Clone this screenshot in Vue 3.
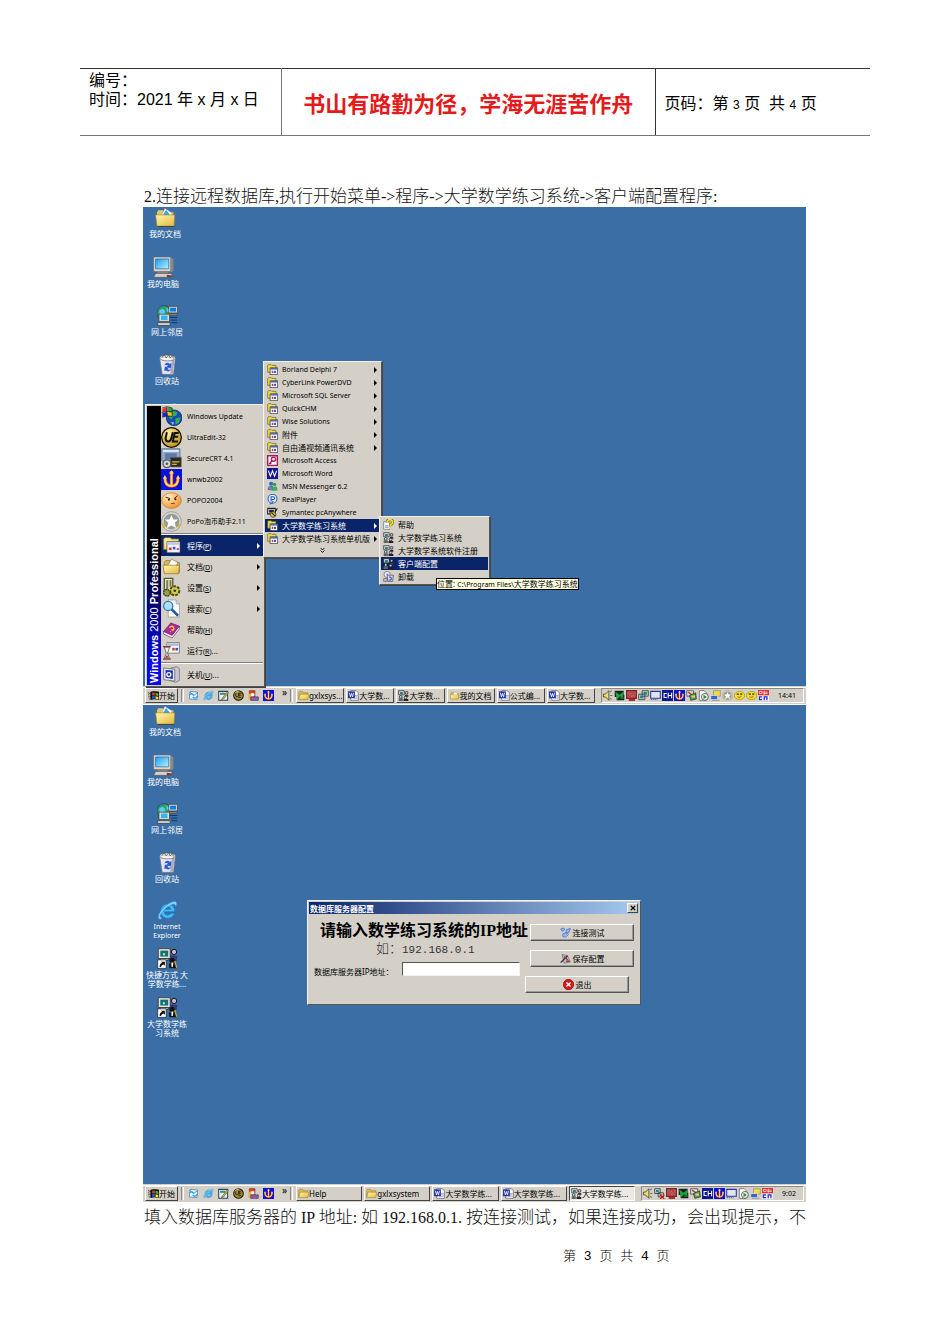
<script setup>
const desktopBase = [
  { icon: 'mydocs', lines: ['我的文档'], left: -2, top: 0 },
  { icon: 'computer', lines: ['我的电脑'], left: -4, top: 50 },
  { icon: 'network', lines: ['网上邻居'], left: 0, top: 98 },
  { icon: 'recycle', lines: ['回收站'], left: 0, top: 147 },
  { icon: 'ie', lines: ['Internet', 'Explorer'], left: 0, top: 195, latin: true },
]

const desktopMore = [
  { icon: 'shortcut', lines: ['快捷方式 大', '学数学练...'], left: 0, top: 243 },
  { icon: 'shortcut', lines: ['大学数学练', '习系统'], left: 0, top: 292 },
]

const startGroups = [
  [
    { icon: 'update', text: 'Windows Update' },
    { icon: 'ue', text: 'UltraEdit-32' },
    { icon: 'crt', text: 'SecureCRT 4.1' },
    { icon: 'anchor', text: 'wnwb2002' },
    { icon: 'popo', text: 'POPO2004' },
    { icon: 'star', text: 'PoPo泡币助手2.11' },
  ],
  [
    { icon: 'programs', text: '程序', key: 'P', arrow: true, active: true },
    { icon: 'docs', text: '文档', key: 'D', arrow: true },
    { icon: 'settings', text: '设置', key: 'S', arrow: true },
    { icon: 'search', text: '搜索', key: 'C', arrow: true },
    { icon: 'book', text: '帮助', key: 'H' },
    { icon: 'run', text: '运行', key: 'R', more: true },
  ],
  [{ icon: 'shutdown', text: '关机', key: 'U', more: true }],
]

const programs = [
  { icon: 'group', text: 'Borland Delphi 7', arrow: true, latin: true },
  { icon: 'group', text: 'CyberLink PowerDVD', arrow: true, latin: true },
  { icon: 'group', text: 'Microsoft SQL Server', arrow: true, latin: true },
  { icon: 'group', text: 'QuickCHM', arrow: true, latin: true },
  { icon: 'group', text: 'Wise Solutions', arrow: true, latin: true },
  { icon: 'group', text: '附件', arrow: true },
  { icon: 'group', text: '自由通视频通讯系统', arrow: true },
  { icon: 'access', text: 'Microsoft Access', latin: true },
  { icon: 'word', text: 'Microsoft Word', latin: true },
  { icon: 'msn', text: 'MSN Messenger 6.2', latin: true },
  { icon: 'real', text: 'RealPlayer', latin: true },
  { icon: 'pca', text: 'Symantec pcAnywhere', latin: true },
  { icon: 'group', text: '大学数学练习系统', arrow: true, active: true },
  { icon: 'group', text: '大学数学练习系统单机版', arrow: true },
]

const system = [
  { icon: 'help', text: '帮助' },
  { icon: 'people', text: '大学数学练习系统' },
  { icon: 'people', text: '大学数学系统软件注册' },
  { icon: 'people', text: '客户端配置', active: true },
  { icon: 'uninstall', text: '卸载' },
]

const quick = ['outlook', 'ie', 'desk', 'ueround', 'player', 'anchor']

const screens = [
  {
    id: 'menu',
    icons: desktopBase,
    tasks: [
      { icon: 'folder', text: 'gxlxsys...' },
      { icon: 'worddoc', text: '大学数...' },
      { icon: 'people', text: '大学数...' },
      { icon: 'docs', text: '我的文档' },
      { icon: 'worddoc', text: '公式编...' },
      { icon: 'worddoc', text: '大学数...' },
    ],
    tray: ['sound', 'green', 'blocked', 'monitors', 'frame', 'ch', 'anchor', 'colors', 'page', 'yellowpc', 'star', 'smile', 'smile', 'cn'],
    time: '14:41',
  },
  {
    id: 'dialog',
    icons: [...desktopBase, ...desktopMore],
    tasks: [
      { icon: 'folder', text: 'Help' },
      { icon: 'folder', text: 'gxlxsystem' },
      { icon: 'worddoc', text: '大学数学练...' },
      { icon: 'worddoc', text: '大学数学练...' },
      { icon: 'people', text: '大学数学练...', active: true },
    ],
    tray: ['sound', 'netoff', 'blocked', 'green', 'colors', 'ch', 'anchor', 'frame', 'page', 'yellowpc', 'cn'],
    time: '9:02',
  },
]
</script>

<template>
  <svg class="defs" aria-hidden="true">
    <defs>
      <linearGradient id="gFolder" x1="0" y1="0" x2="1" y2="1">
        <stop offset="0" stop-color="#fff6b0" /><stop offset="1" stop-color="#e3b93c" />
      </linearGradient>
      <linearGradient id="gScreen" x1="0" y1="0" x2="1" y2="1">
        <stop offset="0" stop-color="#1d9bf0" /><stop offset="1" stop-color="#b6f4ff" />
      </linearGradient>
      <radialGradient id="gGold" cx=".35" cy=".3" r=".8">
        <stop offset="0" stop-color="#fff2a0" /><stop offset="1" stop-color="#b8890c" />
      </radialGradient>
      <radialGradient id="gFace" cx=".35" cy=".3" r=".8">
        <stop offset="0" stop-color="#fff0c0" /><stop offset="1" stop-color="#f08a24" />
      </radialGradient>
    </defs>
    <symbol id="mydocs" viewBox="0 0 32 32">
      <path d="M3 8l2-3h7l2 3h14v16H3z" fill="#e8c860" />
      <path d="M9 14l6-12 11 7-3 10z" fill="#fff" stroke="#86a" stroke-width=".6" />
      <path d="M12 12l5-8 6 8z" fill="#38a8e0" />
      <path d="M1 12h29l-1 17H3z" fill="url(#gFolder)" stroke="#a98a2c" />
      <path d="M4 29h26v1H4z" fill="#333" />
    </symbol>
    <symbol id="computer" viewBox="0 0 32 32">
      <path d="M3 1h24l4 2v18l-3 2H3z" fill="#8f8c88" />
      <path d="M1 0h26v22H1z" fill="#ded9d2" stroke="#6b6762" />
      <path d="M4 3h20v15H4z" fill="url(#gScreen)" stroke="#155aa5" />
      <path d="M8 22h14l3 4H6z" fill="#8a847c" />
      <path d="M4 25h24l3 6H1z" fill="#d8d2ca" stroke="#5c5650" />
      <path d="M21 27l9 1v3h-9z" fill="#6d3f4f" />
    </symbol>
    <symbol id="network" viewBox="0 0 32 32">
      <circle cx="11" cy="12" r="11" fill="#2da06a" stroke="#116" stroke-width=".7" />
      <path d="M4 8q6-4 8 1t-5 8q-5-3-3-9zM14 4q6 2 6 8l-5-2z" fill="#5cc8f4" />
      <path d="M18 2h13v10H18zM19 14h12v2H19z" fill="#e4e0d8" stroke="#333" />
      <path d="M20 4h9v6h-9z" fill="#0f7ede" />
      <path d="M3 14h16v11H3zM1 27h19v4H1z" fill="#e4e0d8" stroke="#333" />
      <path d="M6 16h10v7H6z" fill="#36b3f2" />
      <path d="M20 19h11M21 23h10M22 27h9" stroke="#063a75" stroke-width="1.500" />
    </symbol>
    <symbol id="recycle" viewBox="0 0 32 32">
      <path d="M4 6h24l-3 25H8z" fill="#e6e6ee" stroke="#77798c" />
      <path d="M23 8h4l-3 22h-4z" fill="#a9aabd" />
      <ellipse cx="16" cy="6" rx="12" ry="4.500" fill="#f5f5f5" stroke="#555" />
      <path d="M7 6l4-5 3 5 4-5 2 5 4-4 1 5" fill="#d8d8d8" stroke="#444" />
      <path d="M11 17q4-6 8-2l3-1-1 8-7-3 3-1q-2-2-6-1zM22 23q-4 6-8 2l-3 1 1-7 6 2-2 2q2 2 6 0z" fill="#2858d8" />
    </symbol>
    <symbol id="ie" viewBox="0 0 32 32">
      <path d="M27 20A11 11 0 1 1 27 14L27 18H11Q12 23 16 23 19 23 21 20zM11 14H21Q20 10 16 10 12 10 11 14z" fill="#45b9f4" fill-rule="evenodd" stroke="#1678c8" stroke-width="1" />
      <path d="M3 29Q-1 24 8 14 18 3 27 2 33 3 28 11 29 5 23 7 14 10 7 20 2 27 8 27 6 31 3 29z" fill="#7ed6ff" stroke="#2683cf" stroke-width=".8" />
    </symbol>
    <symbol id="shortcut" viewBox="0 0 32 32">
      <path d="M2 1h18v15H2z" fill="#e6e2da" stroke="#222" />
      <path d="M5 4h12v9H5z" fill="#16706e" />
      <path d="M9 8h3v3H9z" fill="#9ff" />
      <path d="M5 16h12v3H5z" fill="#bbb" stroke="#222" />
      <circle cx="26" cy="6" r="4" fill="#c9b7d5" stroke="#111" stroke-width="1.500" />
      <path d="M20 11l11 1-1 8-4-1-6-5z" fill="#333c78" />
      <circle cx="23" cy="19" r="4" fill="#111" />
      <path d="M18 24l9-2 3 9H19z" fill="#111" /><path d="M22 22h3l-1 7h-2z" fill="#fff" />
      <path d="M27 20l3 10" stroke="#d6a72c" stroke-width="2" />
      <path d="M1 18h13v13H1z" fill="#fff" stroke="#111" />
      <path d="M4 29q0-6 4-6l-2-2h6v6l-2-2q-3 0-4 4z" fill="#111" />
    </symbol>
    <symbol id="update" viewBox="0 0 32 32">
      <circle cx="20" cy="18" r="12" fill="#1a49b8" stroke="#0b1b55" />
      <path d="M14 10q6-4 11 0l-2 5-5 1-2 5-4-4zM22 19l8-2-3 9-5 2z" fill="#36b14a" />
      <path d="M15 24l5 1-2 4z" fill="#7ad0f4" />
      <path d="M2 4l7-2v6l-7 2z" fill="#e33" /><path d="M10 2l7 1v6l-7-1z" fill="#3a3" />
      <path d="M2 11l7-2v6l-7 2z" fill="#22c" /><path d="M10 9l7 1v6l-7-1z" fill="#ec2" />
      <path d="M2 3l7-2 8 2v13l-7-1-8 2M9 2v13M1 10l9-2 7 1" stroke="#111" fill="none" />
    </symbol>
    <symbol id="ue" viewBox="0 0 32 32">
      <circle cx="16" cy="16" r="15" fill="url(#gGold)" stroke="#1b1400" stroke-width="2" />
      <path d="M9 8l-2 9q0 5 4 5t5-6l2-8M27 9h-6l-3 13h8M20 15h6" fill="none" stroke="#111" stroke-width="3" />
    </symbol>
    <symbol id="ueround" viewBox="0 0 32 32">
      <circle cx="16" cy="16" r="14" fill="#9b8a3d" stroke="#221c00" stroke-width="3" />
      <path d="M8 8v9q1 4 4 3t4-4V8M25 9h-6l-2 13h7M18 15h6" fill="none" stroke="#1b1500" stroke-width="2" />
      <path d="M5 10q4-7 12-7" stroke="#fff4a0" stroke-width="2" fill="none" />
    </symbol>
    <symbol id="crt" viewBox="0 0 32 32">
      <path d="M1 1h28v19H1z" fill="#93a9c9" stroke="#54657e" />
      <path d="M3 3h24v3H3z" fill="#dce8f8" /><path d="M6 8h18v9H6z" fill="#5d7aac" />
      <path d="M14 14h17v15H14z" fill="#2c2b22" stroke="#777" />
      <path d="M17 20h11v2H17zM17 24h7v2h-7z" fill="#d8bd39" />
      <circle cx="9" cy="24" r="6" fill="#d4d4d4" stroke="#555" stroke-width="2" /><circle cx="9" cy="24" r="2" fill="#555" />
    </symbol>
    <symbol id="anchor" viewBox="0 0 32 32">
      <path d="M0 0h32v32H0z" fill="#0712dc" />
      <path d="M16 3v23M6 13q0 13 10 13t10-13" fill="none" stroke="#f33" stroke-width="5" />
      <path d="M16 4v22M6 14q0 12 10 12t10-12" fill="none" stroke="#ffe04a" stroke-width="3" />
      <path d="M16 2l4 5h-8zM6 9l3 6H3zM26 9l3 6h-6z" fill="#ffe04a" />
    </symbol>
    <symbol id="popo" viewBox="0 0 32 32">
      <ellipse cx="16" cy="16" rx="15" ry="12" fill="url(#gFace)" stroke="#c57422" />
      <path d="M7 11l7 2M25 9l-5 4" stroke="#5a1c00" stroke-width="1.500" />
      <circle cx="12" cy="15" r="1.500" fill="#211" /><circle cx="22" cy="14" r="1.500" fill="#211" />
      <path d="M15 21q4-2 6 0" stroke="#922" stroke-width="1.500" fill="none" />
    </symbol>
    <symbol id="star" viewBox="0 0 32 32">
      <circle cx="16" cy="16" r="15" fill="#d8d8d4" stroke="#86867f" />
      <circle cx="16" cy="16" r="12" fill="#969b94" />
      <path d="M16 6l3 7h7l-5 5 2 8-7-4-7 4 2-8-5-5h7z" fill="#fff" />
      <path d="M1 20h5v6H4zM26 20h5l-3 6h-2z" fill="#d9b42e" />
    </symbol>
    <symbol id="programs" viewBox="0 0 32 32">
      <path d="M4 6l2-2h8l2 2h11v16H4z" fill="url(#gFolder)" stroke="#8d742a" />
      <path d="M9 10h20v17H9z" fill="#f2f2f2" stroke="#444" /><path d="M10 11h18v4H10z" fill="#bbc7e4" />
      <path d="M12 19h4v4h-4z" fill="#d33" /><path d="M18 18h4v4h-4z" fill="#35c" /><path d="M24 20h3v3h-3z" fill="#b3b" />
    </symbol>
    <symbol id="group" viewBox="0 0 16 16">
      <path d="M1 2l1-1h4l1 1h6v10H1z" fill="#f4dc4c" stroke="#6a5a18" stroke-width="1" />
      <path d="M4.500 5.500h11v10h-11z" fill="#f4f4f8" stroke="#222" /><path d="M5 6h10v2H5z" fill="#3c5cac" />
      <path d="M7 10h2v3H7z" fill="#c33" /><path d="M10 10h3v3h-3z" fill="#35c" />
    </symbol>
    <symbol id="folder" viewBox="0 0 16 16">
      <path d="M1 4l1-2h5l1 2h6v9H1z" fill="#e0bd45" stroke="#8a7023" stroke-width=".7" />
      <path d="M3 6h13l-2 8H1z" fill="url(#gFolder)" stroke="#8a7023" stroke-width=".7" />
    </symbol>
    <symbol id="docs" viewBox="0 0 32 32">
      <path d="M5 10l2-3h7l2 3h12v15H5z" fill="#dcb74a" stroke="#8a7023" />
      <path d="M10 15l6-10 9 4-2 10z" fill="#fff" stroke="#777" />
      <path d="M3 14h25l-1 13H5z" fill="url(#gFolder)" stroke="#8a7023" />
    </symbol>
    <symbol id="settings" viewBox="0 0 32 32">
      <path d="M5 2h13v22H5z" fill="#e4e2c8" stroke="#56563a" stroke-width="2" />
      <path d="M8 5h3v14H8zM13 5h3v10h-3z" fill="#7d7d4a" />
      <circle cx="21" cy="21" r="7" fill="#b8ad2e" stroke="#4a4610" stroke-width="3" stroke-dasharray="4 2" />
      <circle cx="21" cy="21" r="5" fill="#d6cb48" /><circle cx="21" cy="21" r="2" fill="#333" />
      <circle cx="9" cy="24" r="5" fill="#9aa04a" stroke="#3a3c10" stroke-width="2" stroke-dasharray="3 1" />
    </symbol>
    <symbol id="search" viewBox="0 0 32 32">
      <path d="M11 3h12l5 6v20H11z" fill="#fff" stroke="#888" /><path d="M23 3v6h5" fill="#ddd" stroke="#888" />
      <circle cx="11" cy="12" r="7" fill="#a8e0fa" stroke="#3978b8" stroke-width="2" />
      <path d="M16 17l10 10" stroke="#225a9c" stroke-width="4" />
    </symbol>
    <symbol id="book" viewBox="0 0 32 32">
      <path d="M4 19L15 6l13 5-11 14z" fill="#b02a96" stroke="#5c1050" />
      <path d="M4 19l13 6 11-14v4L17 29 4 23z" fill="#fff" stroke="#6b1560" />
      <path d="M13 13q4-4 6 0t-3 4M14 19l1 1" stroke="#ffd84a" stroke-width="2" fill="none" />
    </symbol>
    <symbol id="run" viewBox="0 0 32 32">
      <path d="M9 4h19v16H9z" fill="#f6f6f6" stroke="#555" /><path d="M10 5h17v4H10z" fill="#aebbe0" />
      <path d="M17 12h4v4h-4z" fill="#d43" /><path d="M22 12h4v4h-4z" fill="#35c" />
      <path d="M3 10h12M3 29h12" stroke="#a33" stroke-width="2" />
      <path d="M5 11h8l-3 9 3 8H5l3-8z" fill="#eee" stroke="#333" /><path d="M6 27l3-4 3 4z" fill="#843" />
    </symbol>
    <symbol id="shutdown" viewBox="0 0 32 32">
      <path d="M15 6l9-2 4 3v18l-6 3-9-3z" fill="#c8c6cf" stroke="#666" />
      <path d="M4 6l17 2v18L4 24z" fill="#e2e0e6" stroke="#555" />
      <path d="M7 9l11 1v13L7 21z" fill="#1a30b4" /><circle cx="12" cy="16" r="3" fill="none" stroke="#fff" stroke-width="2" />
    </symbol>
    <symbol id="access" viewBox="0 0 16 16">
      <path d="M1 1h14v14H1z" fill="#fff" stroke="#a3195b" stroke-width="2" />
      <circle cx="9.500" cy="6" r="3" fill="none" stroke="#a3195b" stroke-width="2" /><path d="M8 8l-5 5M4 11l2 2" stroke="#a3195b" stroke-width="2" />
    </symbol>
    <symbol id="word" viewBox="0 0 16 16">
      <path d="M0 0h16v16H0z" fill="#14149a" />
      <path d="M2 4l3 8 3-8 3 8 3-8" stroke="#fff" stroke-width="1.500" fill="none" />
    </symbol>
    <symbol id="worddoc" viewBox="0 0 16 16">
      <path d="M4 1h8l3 3v11H4z" fill="#fff" stroke="#556" /><path d="M8 8h6M8 10h6M8 12h6" stroke="#88a" />
      <path d="M0 2h10v10H0z" fill="#2436a8" /><path d="M2 4l1.500 6L5 5l1.500 5L8 4" stroke="#fff" fill="none" stroke-width="1.200" />
    </symbol>
    <symbol id="msn" viewBox="0 0 16 16">
      <circle cx="6" cy="4" r="3" fill="#2d6cb8" /><path d="M1 13q0-6 5-6t4 7z" fill="#2b87c8" />
      <circle cx="11" cy="5" r="2.500" fill="#3a9a4a" /><path d="M8 14q0-6 4-6t3 6z" fill="#48ac58" /><path d="M2 9l5 3" stroke="#e64" stroke-width="2" />
    </symbol>
    <symbol id="real" viewBox="0 0 16 16">
      <circle cx="8" cy="7" r="6.500" fill="#dcecff" stroke="#2d62ae" stroke-width="1.500" />
      <path d="M6 11V4h3q2 0 2 2t-2 2H7M4 15q4-1 5-5" stroke="#2356a8" stroke-width="1.500" fill="none" />
    </symbol>
    <symbol id="pca" viewBox="0 0 16 16">
      <path d="M1 2h11v8H1z" fill="#ddd" stroke="#222" stroke-width="1.500" /><path d="M3 4h7v4H3z" fill="#225" />
      <circle cx="9" cy="11" r="4" fill="#e3d03c" stroke="#222" /><path d="M7 9l5 4M12 7l3-5" stroke="#111" stroke-width="1.500" />
    </symbol>
    <symbol id="help" viewBox="0 0 16 16">
      <path d="M1 4h9v11H1z" fill="#fff" stroke="#666" /><path d="M3 10h5M3 12h5" stroke="#36a" />
      <path d="M6 5q0-4 4-4t4 4q0 2-3 3v2" stroke="#6a5c00" stroke-width="4" fill="none" />
      <path d="M6 5q0-4 4-4t4 4q0 2-3 3v2M11 12v2" stroke="#f4e23a" stroke-width="2.500" fill="none" />
    </symbol>
    <symbol id="people" viewBox="0 0 16 16">
      <path d="M1 1h8v6H1z" fill="#ddd" stroke="#222" /><path d="M3 3h4v3H3z" fill="#17807c" />
      <circle cx="12.500" cy="4" r="2" fill="#c9b7d5" stroke="#111" /><path d="M10 7h5v3h-5z" fill="#334" />
      <circle cx="4" cy="10" r="2" fill="#d9d9d9" stroke="#111" /><path d="M1 12h6v4H1z" fill="#566" />
      <circle cx="11" cy="11" r="2" fill="#ccc" stroke="#111" /><path d="M8 13h7v3H8z" fill="#222" />
    </symbol>
    <symbol id="uninstall" viewBox="0 0 16 16">
      <circle cx="6" cy="5" r="4.500" fill="#e8e8f4" stroke="#667" /><circle cx="6" cy="5" r="1.200" fill="#88a" />
      <path d="M6 6h9l-1 9H7z" fill="#d4d8ec" stroke="#445" /><path d="M9 9q3-1 3 2t-3 2" stroke="#24c" fill="none" stroke-width="1.500" />
      <path d="M1 11h5v4H1z" fill="#bcc" stroke="#556" />
    </symbol>
    <symbol id="flag" viewBox="0 0 16 16">
      <path d="M4 3q4-2 12 0v11q-8-2-12 0zM0 4h2M0 7h2M0 10h2M1 13h2M2 5h2M2 9h2" fill="#111" stroke="#111" />
      <path d="M6 4q2-1 4 0v4q-2-1-4 0z" fill="#e33" /><path d="M11 4q2 0 4 1v4q-2-1-4-1z" fill="#3b3" />
      <path d="M6 9q2-1 4 0v4q-2-1-4 0z" fill="#25e" /><path d="M11 9q2 0 4 1v4q-2-1-4-1z" fill="#fd2" />
    </symbol>
    <symbol id="outlook" viewBox="0 0 16 16">
      <path d="M3 2l11 1-1 11-11-1z" fill="#eaf4ff" stroke="#2e78c4" /><path d="M3 3l5 5 6-4" stroke="#2e78c4" fill="none" />
      <path d="M2 7q5-3 6 1M14 9q-4 5-7 1" stroke="#2c9be8" stroke-width="2" fill="none" />
    </symbol>
    <symbol id="desk" viewBox="0 0 16 16">
      <path d="M1 2h13v13H1z" fill="#e6f2ea" stroke="#246" stroke-width="1.500" /><path d="M3 4h8v3H3z" fill="#3a8f7a" />
      <path d="M6 12l8-10 1 2-7 9-3 1z" fill="#e8c23a" stroke="#333" stroke-width=".8" />
    </symbol>
    <symbol id="player" viewBox="0 0 16 16">
      <path d="M2 1h8v12H2z" fill="#d84a20" stroke="#822" /><path d="M1 6q4-3 8 1l-3 7H1z" fill="#f6b02c" />
      <circle cx="7" cy="7" r="2.500" fill="#fff" /><path d="M4 10h11v5H4z" fill="#9a5ab4" stroke="#435" />
    </symbol>
    <symbol id="sound" viewBox="0 0 16 16">
      <path d="M2 6h3l5-5v14l-5-5H2z" fill="#f0e060" stroke="#222" /><path d="M12 3l2-2M12 8h3M12 12l2 2" stroke="#666" stroke-width="1.500" />
    </symbol>
    <symbol id="green" viewBox="0 0 16 16">
      <path d="M1 1h13v9H1zM4 7h11v8H4z" fill="#122" /><path d="M2 2l6 5 6-5-1 10-4-3-5 5z" fill="#1fa43a" /><path d="M9 10h5v3H9z" fill="#2a6c3c" />
    </symbol>
    <symbol id="blocked" viewBox="0 0 16 16">
      <path d="M1 1h14v11H1z" fill="#7c8590" stroke="#822" stroke-width="2" /><path d="M4 13h9v3H4z" fill="#933" />
      <circle cx="8" cy="7" r="4" fill="none" stroke="#d33" stroke-width="2" /><path d="M5 10l6-6" stroke="#d33" stroke-width="2" />
    </symbol>
    <symbol id="monitors" viewBox="0 0 16 16">
      <path d="M6 1h9v8H6zM1 6h9v8H1z" fill="#ccc" stroke="#222" /><path d="M8 3h5v4H8zM3 8h5v4H3z" fill="#188a8c" />
    </symbol>
    <symbol id="netoff" viewBox="0 0 16 16">
      <path d="M1 1h8v7H1zM6 7h8v6H6z" fill="#ccc" stroke="#222" /><path d="M3 3h4v3H3zM8 9h4v2H8z" fill="#188a8c" /><path d="M9 10l6 6M15 10l-6 6" stroke="#d11" stroke-width="2" />
    </symbol>
    <symbol id="frame" viewBox="0 0 16 16">
      <path d="M1 2h14v10H1z" fill="#dfe4f4" stroke="#26389c" stroke-width="1.500" /><path d="M1 14h10" stroke="#26389c" stroke-dasharray="2 1" />
    </symbol>
    <symbol id="ch" viewBox="0 0 16 16">
      <path d="M0 0h16v16H0z" fill="#0a1a8c" />
      <path d="M7 5H3v6h4M9 4v8M14 4v8M9 8h5" stroke="#fff" stroke-width="1.500" fill="none" />
    </symbol>
    <symbol id="colors" viewBox="0 0 16 16">
      <path d="M1 1h10v8H1z" fill="#ddd" stroke="#333" /><path d="M3 3l6 4" stroke="#c33" stroke-width="2" />
      <path d="M5 8l9-4 1 9-8 2z" fill="#4c9e62" stroke="#223" /><path d="M8 8h5v3H8z" fill="#ecd842" />
    </symbol>
    <symbol id="page" viewBox="0 0 16 16">
      <path d="M2 1h7l3 3v11H2z" fill="#fff" stroke="#555" /><circle cx="10" cy="10" r="5" fill="#e9f4e6" stroke="#333" /><path d="M8 7l5 3-5 3z" fill="#2a8c3a" />
    </symbol>
    <symbol id="yellowpc" viewBox="0 0 16 16">
      <path d="M5 1h10v8H5z" fill="#f2dc3a" stroke="#888" /><path d="M1 8h10v6H1z" fill="#3a66cc" stroke="#eee" /><path d="M3 15h11" stroke="#888" />
    </symbol>
    <symbol id="smile" viewBox="0 0 16 16">
      <ellipse cx="8" cy="8" rx="7.500" ry="6" fill="#f3e02a" stroke="#a38c10" /><path d="M4 6h3M9 6h3" stroke="#222" stroke-width="1.500" /><path d="M5 10q4 2 6-1" stroke="#a22" fill="none" />
    </symbol>
    <symbol id="cn" viewBox="0 0 16 16">
      <path d="M0 0h16v8H0z" fill="#e02b2b" /><path d="M2 2h4v3H2zM9 1v6M8 3h6M8 5h6" stroke="#fff" fill="none" />
      <path d="M0 8h16v8H0z" fill="#f4f4ff" /><path d="M6 10H2v4h4M9 15v-5h4v5" stroke="#1b2cc8" stroke-width="1.800" fill="none" />
    </symbol>
    <symbol id="connect" viewBox="0 0 16 16">
      <path d="M1 3q4-3 6 0l-2 3q-3 0-4-3zM9 4l6-2-2 6-4 1zM4 10l5-2 3 3-4 4-4-1z" fill="#8fb8f4" stroke="#3d68c4" />
    </symbol>
    <symbol id="save" viewBox="0 0 16 16">
      <path d="M3 2l8 2 4 9-9 2z" fill="#b9bccc" stroke="#667" /><path d="M1 14L11 4" stroke="#333" stroke-width="2" /><path d="M6 5l5 5M9 12h5" stroke="#b02844" stroke-width="2" />
    </symbol>
    <symbol id="exit" viewBox="0 0 16 16">
      <circle cx="8" cy="8" r="7.500" fill="#d81414" stroke="#8c0808" /><path d="M5 5l6 6M11 5l-6 6" stroke="#fff" stroke-width="2" />
    </symbol>
  </svg>

  <div class="page">
    <table class="head">
      <colgroup><col class="c-info" /><col class="c-motto" /><col class="c-number" /></colgroup>
      <tbody>
        <tr>
          <td class="info">编号：<br />时间：2021 年 x 月 x 日</td>
          <td class="motto">书山有路勤为径，学海无涯苦作舟</td>
          <td class="number">页码：第 <small>3</small> 页&nbsp; 共 <small>4</small> 页</td>
        </tr>
      </tbody>
    </table>

    <main class="content">
      <p class="intro"><span>2.</span>连接远程数据库<span>,</span>执行开始菜单<span>-&gt;</span>程序<span>-&gt;</span>大学数学练习系统<span>-&gt;</span>客户端配置程序<span>:</span></p>

      <section v-for="screen in screens" :key="screen.id" class="screen">
        <div class="desktop">
          <div
            v-for="(item, i) in screen.icons"
            :key="i"
            class="shortcut"
            :class="{ latin: item.latin }"
            :style="{ left: item.left + 'px', top: item.top + 'px' }"
          >
            <svg><use :href="'#' + item.icon" /></svg>
            <span v-for="line in item.lines" :key="line">{{ line }}</span>
          </div>

          <template v-if="screen.id === 'menu'">
            <nav class="menu start-menu">
              <div class="banner"><span><b>Windows</b> 2000 <b>Professional</b></span></div>
              <div class="groups">
                <div v-for="(group, g) in startGroups" :key="g" class="group">
                  <button v-for="item in group" :key="item.text" type="button" class="item big" :class="{ active: item.active, latin: !item.key }">
                    <svg><use :href="'#' + item.icon" /></svg>
                    <span>{{ item.text }}<span v-if="item.key" class="key">(<u>{{ item.key }}</u>)</span><template v-if="item.more">...</template></span>
                    <i v-if="item.arrow" class="arrow"></i>
                  </button>
                </div>
              </div>
            </nav>
            <nav class="menu programs-menu">
              <button v-for="item in programs" :key="item.text" type="button" class="item" :class="{ active: item.active, latin: item.latin }">
                <svg><use :href="'#' + item.icon" /></svg>
                <span>{{ item.text }}</span>
                <i v-if="item.arrow" class="arrow"></i>
              </button>
              <button type="button" class="expand" aria-label="展开">
                <svg viewBox="0 0 8 10"><path d="M1 1l3 3 3-3M1 5l3 3 3-3" fill="none" stroke="#000" stroke-width="1.500" /></svg>
              </button>
            </nav>
            <nav class="menu system-menu">
              <button v-for="item in system" :key="item.text" type="button" class="item" :class="{ active: item.active }">
                <svg><use :href="'#' + item.icon" /></svg>
                <span>{{ item.text }}</span>
              </button>
            </nav>
            <div class="tooltip" role="tooltip">位置: <span>C:\Program Files\</span>大学数学练习系统</div>
          </template>

          <form v-else class="dialog" @submit.prevent>
            <header class="titlebar">
              <span>数据库服务器配置</span>
              <button type="button" class="close" aria-label="关闭">
                <svg viewBox="0 0 8 8"><path d="M1 1l6 6M7 1l-6 6" stroke="#000" stroke-width="1.500" /></svg>
              </button>
            </header>
            <div class="dialog-body">
              <div class="fields">
                <h2>请输入数学练习系统的IP地址</h2>
                <p>如：<span>192.168.0.1</span></p>
                <div class="field">
                  <label for="ip">数据库服务器IP地址：</label>
                  <input id="ip" type="text" />
                </div>
              </div>
              <div class="actions">
                <button type="button"><svg><use href="#connect" /></svg>连接测试</button>
                <button type="button"><svg><use href="#save" /></svg>保存配置</button>
                <button type="button"><svg><use href="#exit" /></svg>退出</button>
              </div>
            </div>
          </form>
        </div>

        <footer class="taskbar">
          <button type="button" class="start"><svg><use href="#flag" /></svg>开始</button>
          <i class="grip"></i>
          <div class="quick">
            <svg v-for="name in quick" :key="name"><use :href="'#' + name" /></svg>
          </div>
          <span class="more">»</span>
          <i class="grip"></i>
          <div class="tasks">
            <button v-for="(task, i) in screen.tasks" :key="i" type="button" :class="{ active: task.active }">
              <svg><use :href="'#' + task.icon" /></svg><span>{{ task.text }}</span>
            </button>
          </div>
          <div class="tray">
            <svg v-for="(name, i) in screen.tray" :key="i"><use :href="'#' + name" /></svg>
            <time>{{ screen.time }}</time>
          </div>
        </footer>
      </section>

      <p class="outro">填入数据库服务器的<span> IP </span>地址<span>: </span>如<span> 192.168.0.1. </span>按连接测试，如果连接成功，会出现提示，不</p>
    </main>
    <footer class="folio">第 3 页 共 4 页</footer>
  </div>
</template>

<style>
body { background: #fff; }
</style>

<style scoped>
.defs { position: absolute; width: 0; height: 0; }
.page { padding: 68px 80px 0; color: #000; font-family: "Liberation Sans", "Noto Sans CJK SC", sans-serif; }
.head { width: 100%; border-collapse: collapse; table-layout: fixed; font-size: 16px; line-height: 19px; }
.c-info { width: 25.5%; }
.c-motto { width: 47.3%; }
.c-number { width: 27.2%; }
.head td { height: 64px; padding: 2px 9px 0; border: 1px solid #333; border-bottom-color: #777; white-space: nowrap; }
.head td:first-child { border-left: 0; border-right-color: #777; }
.head td:last-child { border-right: 0; }
.head .info { vertical-align: top; }
.head .motto { padding: 4px 0 0; height: 62px; color: #e31b1b; font-size: 22px; font-weight: 700; text-align: center; }
.head .number { padding-top: 4px; height: 62px; }
.head small { font-size: 12px; }

.content { padding: 50px 64px 0 63px; }
p { margin: 0; }
.intro, .outro { padding-left: 1px; color: #111; font: 300 17px/21px "Liberation Serif", "Noto Sans CJK SC", serif; white-space: nowrap; }
.intro span, .outro span { font-size: 16px; }
.outro { line-height: 30px; }
.folio { padding: 14px 0 0 483px; font: 300 13px/20px "Liberation Mono", "Noto Sans CJK SC", monospace; }

.screen { margin-bottom: 1px; font: 8px/9px "Noto Sans", "Noto Sans CJK SC", sans-serif; }
.screen button, .screen input { margin: 0; padding: 0; color: inherit; font: inherit; }
.screen svg { flex: none; }
.desktop { position: relative; height: 479px; background: #3a6ea5; }
.shortcut { position: absolute; display: flex; flex-direction: column; align-items: center; width: 48px; color: #fff; line-height: 9px; white-space: nowrap; }
.shortcut svg { width: 21px; height: 21px; margin-bottom: 1px; }
.latin { font-size: 7px; }

.menu { position: absolute; box-sizing: border-box; padding: 1px; border: 1px solid; border-color: #f4f2ee #555 #555 #f4f2ee; background: #d4d0c8; box-shadow: 1px 1px #444; }
.start-menu { left: 2px; bottom: -1px; display: flex; width: 120px; }
.programs-menu { left: 120px; top: 154px; width: 119px; }
.system-menu { left: 236px; top: 309px; width: 111px; }
.banner { display: flex; width: 14px; background: linear-gradient(#000 50%, #0808e8 92%); }
.banner span { writing-mode: vertical-rl; transform: rotate(180deg); color: #fff; font: 11px/14px "Liberation Sans", sans-serif; white-space: nowrap; padding-top: 2px; }
.groups { flex: 1; }
.group + .group { margin-top: 1px; border-top: 1px solid #808080; box-shadow: inset 0 1px #fff; padding-top: 1px; }
.item { display: flex; align-items: center; gap: 4px; width: 100%; height: 13px; border: 0; background: none; text-align: left; white-space: nowrap; }
.screen .item { padding: 0 3px 0 2px; }
.screen .item.big { gap: 5px; height: 21px; padding: 0 3px 0 0; }
.screen .item.latin { font-size: 7px; }
.item svg { width: 11px; height: 11px; }
.item.big svg { width: 21px; height: 21px; }
.screen .item.active { background: #0a246a; color: #fff; }
.key { font-size: 7px; }
.arrow { margin-left: auto; border: 3px solid transparent; border-left-color: currentColor; border-right: 0; }
.expand { display: block; width: 100%; height: 11px; border: 0; background: none; text-align: center; }
.expand svg { width: 5px; height: 7px; }
.tooltip { position: absolute; left: 293px; top: 371px; border: 1px solid #000; background: #ffffe1; white-space: nowrap; }
.tooltip span { font-size: 7px; }

.dialog { position: absolute; left: 164px; top: 195px; width: 334px; height: 105px; box-sizing: border-box; padding: 1px; border: 1px solid; border-color: #f4f2ee #555 #555 #f4f2ee; background: #d4d0c8; }
.titlebar { display: flex; align-items: center; justify-content: space-between; height: 12px; padding: 0 1px; background: linear-gradient(90deg, #0a246a, #a6caf0); color: #fff; font-weight: 700; }
.close { display: flex; align-items: center; justify-content: center; width: 11px; height: 10px; border: 1px solid; border-color: #fff #444 #444 #fff; background: #d4d0c8; }
.close svg { width: 6px; height: 6px; }
.dialog-body { display: flex; padding: 7px 5px 0; }
.fields { display: flex; flex: 1; flex-direction: column; min-width: 0; white-space: nowrap; }
.fields h2 { margin: 0 0 0 6px; font: 700 16px/20px "Liberation Serif", "Noto Sans CJK SC", serif; }
.fields p { margin-left: 62px; color: #333; font: 300 13px/16px "Liberation Serif", "Noto Sans CJK SC", serif; }
.fields p span { font-family: "Liberation Mono", monospace; font-size: 11px; }
.field { display: flex; align-items: flex-end; justify-content: space-between; width: 206px; padding-top: 4px; }
.field input { box-sizing: border-box; width: 118px; height: 14px; border: 1px solid; border-color: #555 #f4f2ee #f4f2ee #555; background: #fff; border-radius: 0; outline: 0; }
.actions { display: flex; flex-direction: column; align-items: flex-end; gap: 9px; width: 109px; padding-top: 3px; }
.actions button { display: flex; align-items: center; justify-content: center; gap: 2px; width: 104px; height: 17px; border: 1px solid; border-color: #fff #555 #555 #fff; background: #d4d0c8; box-shadow: inset -1px -1px #999; }
.actions button:last-child { align-self: flex-start; }
.actions svg { width: 11px; height: 11px; }

.taskbar { display: flex; align-items: center; gap: 3px; height: 18px; box-sizing: border-box; padding: 0 2px 1px; border-top: 1px solid #d4d0c8; background: #d4d0c8; box-shadow: inset 0 1px #fff; white-space: nowrap; }
.start, .tasks button { display: flex; align-items: center; height: 15px; border: 1px solid; border-color: #fff #444 #444 #fff; background: #d4d0c8; box-sizing: border-box; }
.start { justify-content: center; width: 33px; }
.start svg, .tasks svg, .tray svg { width: 11px; height: 11px; }
.grip { width: 1px; height: 13px; border-left: 1px solid #888; border-right: 1px solid #fff; }
.quick { display: flex; gap: 4px; padding: 0 1px; }
.quick svg { width: 11px; height: 11px; }
.more { width: 9px; margin-top: -5px; font-size: 10px; text-align: right; }
.tasks { display: flex; flex: 1; gap: 2px; min-width: 0; }
.tasks button { flex: 1 1 0; min-width: 0; overflow: hidden; }
.screen .tasks button { padding-left: 1px; }
.tasks button.active { border-color: #444 #fff #fff #444; background: #ece9e4; }
.tray { display: flex; align-items: center; gap: 1px; height: 15px; padding-right: 7px; border: 1px solid; border-color: #888 #fff #fff #888; box-sizing: border-box; margin-left: 3px; }
.tray time { margin-left: 8px; font-size: 7px; }
</style>
